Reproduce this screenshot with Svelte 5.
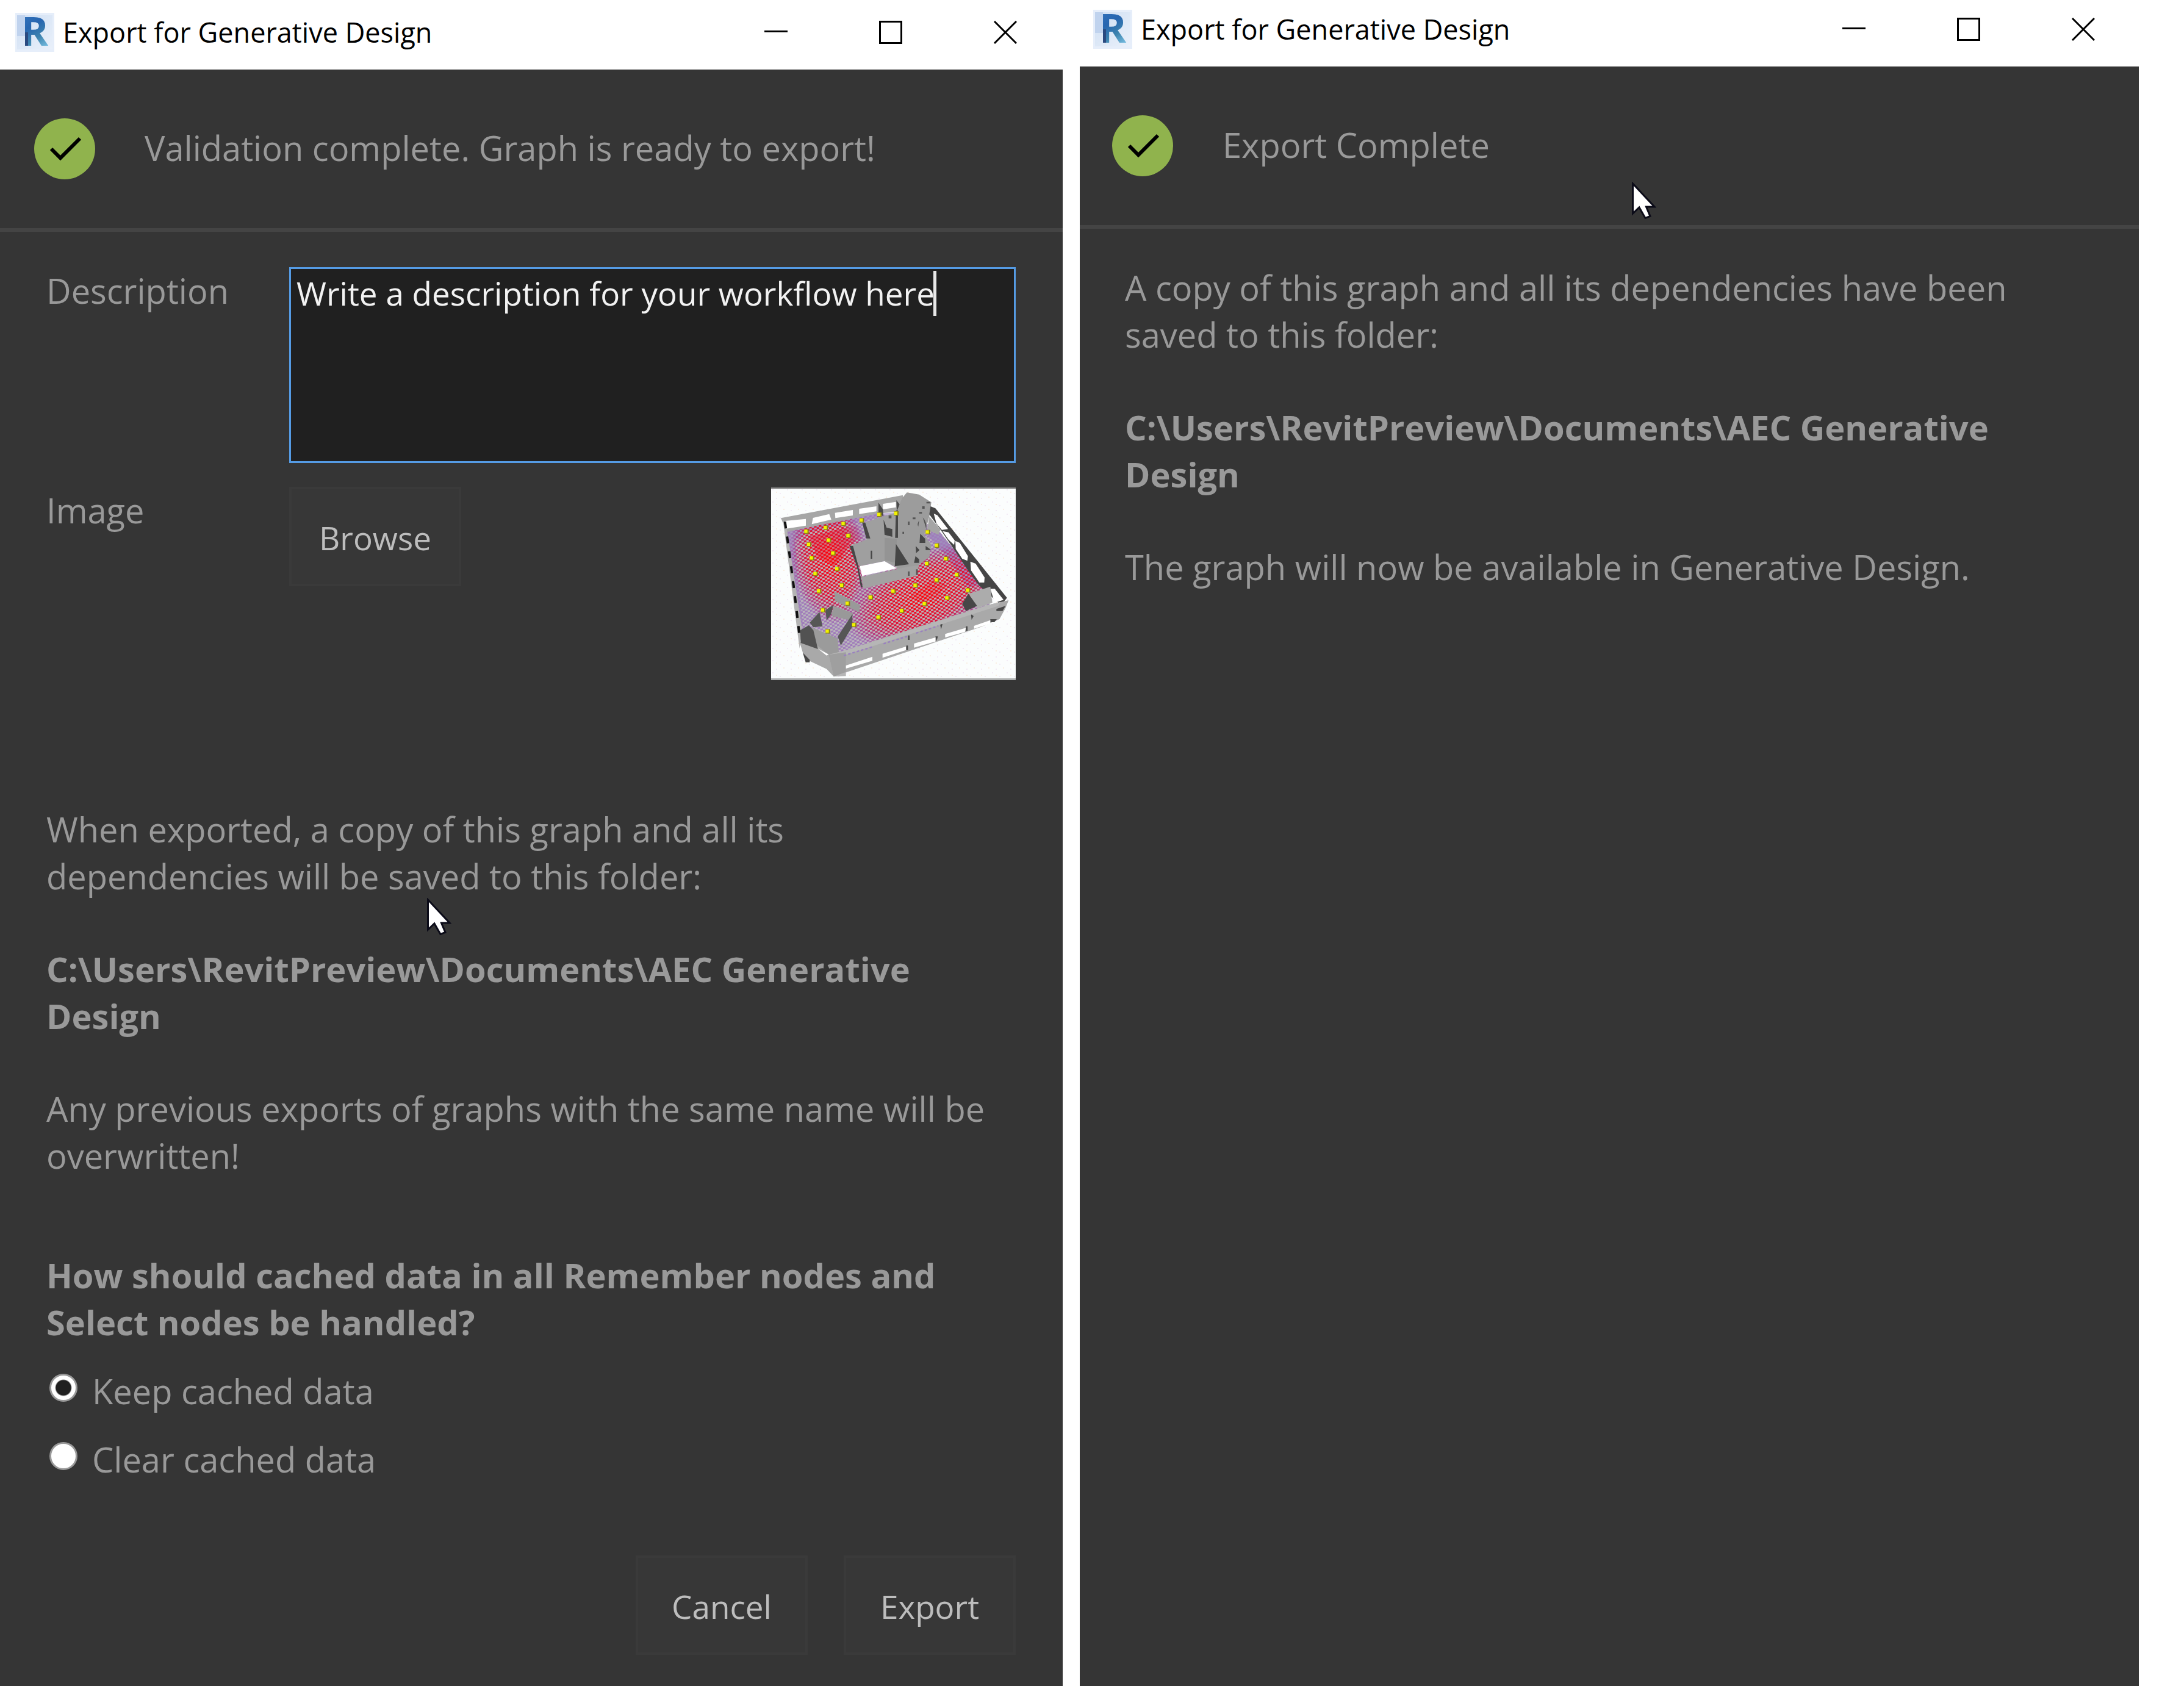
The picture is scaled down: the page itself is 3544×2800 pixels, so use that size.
<script>
  let description = $state('Write a description for your workflow here');
  let cached = $state('keep');

  const nodes = [
    [245, 273], [340, 254], [428, 235], [517, 218], [604, 190], [687, 184], [258, 337], [355, 316],
    [452, 294], [272, 404], [377, 380], [397, 457], [290, 481], [420, 538], [307, 566], [448, 627],
    [327, 660], [480, 732], [350, 764], [561, 597], [600, 695], [673, 567], [715, 663], [782, 538],
    [827, 629], [838, 431], [886, 512], [938, 600], [842, 276], [887, 342], [932, 407], [985, 486], [1040, 562]
  ];
</script>

{#snippet titleBar()}
  <header class="titlebar">
    <svg class="logo" viewBox="0 0 64 64" aria-hidden="true">
      <defs>
        <linearGradient id="logo-bg" x1="0" y1="0" x2="1" y2="1">
          <stop offset="0" stop-color="#cfdff3" />
          <stop offset="1" stop-color="#e9f0fa" />
        </linearGradient>
        <linearGradient id="logo-fg" x1="0" y1="0" x2="0.3" y2="1">
          <stop offset="0" stop-color="#3c7cc4" />
          <stop offset="0.5" stop-color="#2766b0" />
          <stop offset="0.75" stop-color="#3d83ae" />
          <stop offset="1" stop-color="#78bfe2" />
        </linearGradient>
      </defs>
      <rect width="64" height="64" fill="#e6eefa" />
      <rect x="3" y="4" width="58" height="56" fill="url(#logo-bg)" />
      <path d="M3 4h13v34H3z" fill="#c0d3ee" />
      <text x="10" y="54" class="logo-letter" fill="url(#logo-fg)">R</text>
      <path d="M16 32h5v22h-5z" fill="#2a4a80" />
    </svg>
    <h1>Export for Generative Design</h1>
    <div class="controls">
      <button aria-label="Minimize"><svg viewBox="0 0 38 38"><path d="M0 17.5h38" /></svg></button>
      <button aria-label="Maximize"><svg viewBox="0 0 38 38"><path d="M1.5 1.5h35v35h-35z" /></svg></button>
      <button aria-label="Close"><svg viewBox="0 0 38 38"><path d="M1 1l36 36M37 1L1 37" /></svg></button>
    </div>
  </header>
{/snippet}

{#snippet status(message)}
  <div class="status" role="status">
    <svg class="tick" viewBox="0 0 100 100" aria-hidden="true">
      <circle cx="50" cy="50" r="50" />
      <path d="M28 50l15 15 32-32" />
    </svg>
    <span>{message}</span>
  </div>
{/snippet}

{#snippet pointer()}
  <svg class="pointer" viewBox="0 0 40 62" aria-hidden="true">
    <path d="M1.5 3V52L12 42L22 59.500L30 56.500L23.500 41H37Z" />
  </svg>
{/snippet}

<main class="desktop">
  <section class="window setup">
    {@render titleBar()}
    <div class="client">
      {@render status('Validation complete. Graph is ready to export!')}
      <form class="content" onsubmit={(e) => e.preventDefault()}>
        <div class="fields">
          <label for="description">Description</label>
          <div class="editor">
            <textarea id="description" bind:value={description} spellcheck="false"></textarea>
            <span class="caret"></span>
          </div>
          <label for="browse">Image</label>
          <div class="picker">
            <button class="action" id="browse" type="button">Browse</button>
            <svg class="preview" viewBox="72 54 1203 951" role="img" aria-label="Graph preview">
              <defs>
                <pattern id="paper" width="72" height="60" patternUnits="userSpaceOnUse">
                  <rect width="72" height="60" fill="#fbfdfd" />
                  <path d="M6 6h6v6H6zM42 24h6v6h-6zM24 48h6v6h-6z" fill="#f3ebf6" />
                  <path d="M24 18h6v6h-6zM60 42h6v6h-6z" fill="#faeee2" />
                </pattern>
                <pattern id="grid" width="24" height="18" patternUnits="userSpaceOnUse" patternTransform="rotate(-9)">
                  <rect width="13" height="9" fill="#fff" />
                  <rect x="12" y="9" width="12" height="9" fill="#fff" />
                </pattern>
                <mask id="cells"><rect x="72" y="54" width="1203" height="951" fill="url(#grid)" /></mask>
                <radialGradient id="heat-a" gradientUnits="userSpaceOnUse" cx="0" cy="0" r="1" gradientTransform="translate(360 410) rotate(-8) scale(200 330)">
                  <stop offset="0" stop-color="#ff0008" />
                  <stop offset="0.6" stop-color="#dc1238" />
                  <stop offset="0.85" stop-color="#b03a86" stop-opacity="0.8" />
                  <stop offset="1" stop-color="#a070b8" stop-opacity="0" />
                </radialGradient>
                <radialGradient id="heat-b" gradientUnits="userSpaceOnUse" cx="0" cy="0" r="1" gradientTransform="translate(820 590) rotate(-24) scale(420 220)">
                  <stop offset="0" stop-color="#ff0008" />
                  <stop offset="0.6" stop-color="#dc1238" />
                  <stop offset="0.85" stop-color="#b03a86" stop-opacity="0.8" />
                  <stop offset="1" stop-color="#a070b8" stop-opacity="0" />
                </radialGradient>
              </defs>
              <rect x="72" y="54" width="1203" height="951" fill="url(#paper)" />
              <path d="M72 58.500H1275" stroke="#666" stroke-width="9" />
              <path d="M72 1000.500H1275" stroke="#aeb0b0" stroke-width="9" />

              <path d="M145 265L600 185L850 240L905 280L1110 530L1150 640L400 880L215 790Z" fill="#bab6bd" />
              <path d="M145 265L600 185L700 180L520 225L250 275L190 320L205 520L230 740L205 730Z" fill="#9d84bc" opacity="0.6" />
              <path d="M830 280L905 285L1110 530L1040 550L940 400Z" fill="#9780bd" opacity="0.75" />
              <g mask="url(#cells)">
                <path d="M145 265L600 185L850 240L905 280L1110 530L1150 640L400 880L215 790Z" fill="#a07cba" />
                <path d="M145 265L600 185L850 240L905 280L1110 530L1150 640L400 880L215 790Z" fill="url(#heat-a)" />
                <path d="M145 265L600 185L850 240L905 280L1110 530L1150 640L400 880L215 790Z" fill="url(#heat-b)" />
              </g>
              <path d="M260 300L520 235L530 300L460 330L420 400L380 440L300 400Z" fill="url(#heat-a)" opacity="0.4" />
              <path d="M750 600L870 510L930 530L900 590L820 620Z" fill="url(#heat-b)" opacity="0.2" />

              <path d="M120 208L720 95V175L600 185L150 275Z" fill="#a6a6a6" />
              <path d="M140 222L243 212V245L146 260ZM278 207L358 188L368 215L272 238ZM386 182L474 168V195L388 208ZM505 162L590 150V175L505 188ZM622 138L686 128V155L622 165Z" fill="#fff" />
              <path d="M600 132L622 165L624 200L600 180ZM688 120L716 155L712 175L690 170Z" fill="#4a4a4a" />
              <path d="M130 215L150 265L225 760L212 850Z" fill="#b4b4b4" />
              <path d="M140 225L162 380L180 520L196 650L212 790" fill="none" stroke="#111" stroke-width="12" stroke-dasharray="34 40" />

              <path d="M528 232L620 200L690 180V450L630 420L505 445L458 345L545 312Z" fill="#9f9f9f" />
              <path d="M690 175L716 110L740 82L800 92L860 130L850 200L825 290L860 340L850 400L795 440L785 490L690 460Z" fill="#9c9c9c" />
              <path d="M508 445L630 420L690 455L520 493Z" fill="#fff" />
              <path d="M516 497L745 447L800 440L785 492L525 555Z" fill="#a2a2a2" />
              <path d="M630 305L690 310V430L630 415Z" fill="#949494" />
              <path d="M458 345H475L500 440L522 545L514 550L495 450ZM686 335L750 435L680 445ZM520 230H535L560 308H540ZM625 215L640 255L668 262V300L630 290ZM686 170H696V305H682ZM805 285L830 310V330H802ZM783 345L802 365L785 380ZM782 395L800 410V428H775ZM832 345L860 365H832ZM562 368H569V408H562Z" fill="#464646" />
              <path d="M815 150h12v12h-12zM800 178h14v8h-14zM836 128h18v8h-18zM745 225h8v18h-8zM768 205h14v9h-14zM818 205q20 20 18 60M800 220q-12 18-4 30M650 195h14v14h-14zM718 275h8v10h-8zM745 470h8v22h-8zM785 460h8v28h-8z" fill="#555" />

              <path d="M856 150L880 160L1232 600L1215 622L1190 625L1095 540L1040 465L960 345L905 265L850 190Z" fill="#454545" />
              <path d="M850 200L905 265L895 290L840 265Z" fill="#a5a5a5" />
              <path d="M872 186L890 194L942 262L912 266L885 235ZM915 272L945 278L975 318L972 340L945 315ZM978 320L1000 330L1040 395L1037 418L1012 408L980 360ZM1052 422L1078 432L1122 500L1120 525L1096 525L1055 465ZM1150 556L1172 556L1215 610L1172 625Z" fill="#fff" />

              <path d="M1045 580L1150 545L1160 625L1085 650Z" fill="#acacac" />
              <path d="M1042 580L1085 640L1030 665L1012 630Z" fill="#474747" />

              <path d="M385 570L510 635L505 672L385 615ZM378 640L475 675L460 710L370 690Z" fill="#999" />
              <path d="M262 722L310 670L325 740L280 745ZM340 660L378 635L368 680L345 712ZM472 680V740L415 835L400 790Z" fill="#565656" />
              <path d="M270 745L400 800L405 870L350 885L300 850Z" fill="#9b9b9b" />

              <path d="M212 815L300 835L355 880L440 860L570 815L1140 635L1240 612L1225 650L1195 705L1100 745L380 987L345 950L250 905L228 870Z" fill="#a9a9a9" />
              <path d="M215 760L258 735L280 760L302 852L218 822Z" fill="#525252" />
              <path d="M228 870L262 905V917H242ZM1180 655L1225 640L1210 665H1180ZM1150 705H1182L1170 720H1150ZM1055 680L1068 690L1058 708ZM903 730L915 728L908 755ZM745 785h8v22h-8zM737 835h8v22h-8zM1030 740h8v22h-8zM880 790h12l-6 24z" fill="#474747" />
              <path d="M355 880L440 858L1140 635L1200 620L1190 640L440 880L440 985L380 987Z" fill="#b6b6b6" />
              <path d="M355 880L440 868V965L380 987Z" fill="#9f9f9f" />
              <path d="M440 933L570 890V910L440 948ZM620 875L735 840V857L620 895ZM775 825L880 795V815L775 845ZM928 778L1030 748L1025 768L928 795ZM1070 738L1150 710V727L1070 752ZM302 850L355 878L345 884Z" fill="#fff" />
              <path d="M430 884L575 840M625 826L740 790M785 774L895 738" stroke="#9a80c0" stroke-width="7" stroke-dasharray="12 10" />

              {#each nodes as [x, y]}
                <rect x={x - 10} y={y - 10} width="22" height="22" fill="#8a8415" />
                <rect x={x - 10} y={y - 8} width="16" height="16" fill="#f2f200" />
              {/each}
            </svg>
          </div>
        </div>

        <div class="notes">
          <p>When exported, a copy of this graph and all its dependencies will be saved to this folder:</p>
          <p class="strong">C:\Users\RevitPreview\Documents\AEC Generative Design</p>
          <p>Any previous exports of graphs with the same name will be overwritten!</p>
        </div>

        <fieldset>
          <legend class="strong">How should cached data in all Remember nodes and Select nodes be handled?</legend>
          <label class="choice"><input type="radio" name="cached" value="keep" bind:group={cached} />Keep cached data</label>
          <label class="choice"><input type="radio" name="cached" value="clear" bind:group={cached} />Clear cached data</label>
        </fieldset>

        <footer>
          <button class="action" type="button">Cancel</button>
          <button class="action" type="submit">Export</button>
        </footer>
      </form>
    </div>
    {@render pointer()}
  </section>

  <section class="window done">
    {@render titleBar()}
    <div class="client">
      {@render status('Export Complete')}
      <div class="content notes">
        <p>A copy of this graph and all its dependencies have been saved to this folder:</p>
        <p class="strong">C:\Users\RevitPreview\Documents\AEC Generative Design</p>
        <p>The graph will now be available in Generative Design.</p>
      </div>
    </div>
    {@render pointer()}
  </section>
</main>

<style>
  :global(body) {
    background: #fff;
  }

  .desktop {
    display: grid;
    grid-template-columns: 1742fr 1736fr;
    gap: 28px;
    padding: 0 38px 34px 0;
    font-family: 'Open Sans', 'Segoe UI', sans-serif;
    font-size: 56px;
    line-height: 77px;
    color: #999;
  }

  .window {
    position: relative;
    display: flex;
    flex-direction: column;
    min-width: 0;
  }

  button,
  textarea {
    font-family: inherit;
  }

  .titlebar {
    display: flex;
    align-items: center;
    box-sizing: border-box;
    height: 114px;
    padding: 0 0 8px 25px;
    background: #fff;
    color: #000;
  }

  .done .titlebar {
    height: 109px;
    padding: 0 0 14px 22px;
  }

  .logo {
    width: 64px;
    height: 64px;
    margin-right: 14px;
    overflow: visible;
  }

  .logo-letter {
    font-size: 67px;
    font-weight: 700;
  }

  h1 {
    flex: 1;
    margin: 0;
    font-size: 45px;
    font-weight: 400;
    line-height: 64px;
  }

  .controls {
    display: flex;
    align-self: stretch;
  }

  .done .controls {
    margin-right: -3px;
  }

  .controls button {
    display: grid;
    place-items: center;
    width: 188px;
    padding: 0;
    border: 0;
    background: none;
  }

  .controls svg {
    width: 38px;
    height: 38px;
    fill: none;
    stroke: #000;
    stroke-width: 3;
  }

  .client {
    flex: 1;
    background: #353535;
  }

  .status {
    display: flex;
    align-items: center;
    gap: 81px;
    height: 260px;
    padding-left: 56px;
    border-bottom: 6px solid #444;
  }

  .done .status {
    padding-left: 53px;
  }

  .status span {
    padding-bottom: 3px;
  }

  .tick {
    width: 100px;
    height: 100px;
  }

  .tick circle {
    fill: #90b34d;
  }

  .tick path {
    fill: none;
    stroke: #000;
    stroke-width: 6;
  }

  .content {
    padding: 58px 77px 51px 76px;
  }

  .done .content {
    padding-left: 74px;
  }

  .fields {
    display: grid;
    grid-template-columns: 398px 1fr;
    row-gap: 39px;
  }

  .editor {
    position: relative;
    display: flex;
  }

  textarea {
    flex: 1;
    box-sizing: border-box;
    height: 321px;
    min-width: 0;
    padding: 2px 9px;
    border: 3px solid #559be4;
    background: #202020;
    color: #f2f2f2;
    font-size: 53px;
    line-height: 76px;
    resize: none;
    outline: 0;
  }

  .caret {
    position: absolute;
    top: 6px;
    left: 1056px;
    width: 5px;
    height: 74px;
    background: #e8e8e8;
  }

  .picker {
    display: flex;
    align-items: flex-start;
    justify-content: space-between;
  }

  .action {
    box-sizing: border-box;
    width: 282px;
    height: 163px;
    padding: 4px 0 0;
    border: 4px solid #3a3a3a;
    background: #373737;
    color: #bdbdbd;
    font-size: 53px;
    line-height: 72px;
  }

  .preview {
    width: 401px;
    height: 317px;
  }

  .setup .notes {
    margin-top: 206px;
  }

  p {
    max-width: 1560px;
    margin: 0 0 75px;
  }

  p:last-child {
    margin-bottom: 0;
  }

  .strong {
    font-weight: 700;
  }

  fieldset {
    display: flex;
    flex-direction: column;
    gap: 35px;
    margin: 119px 0 0;
    padding: 0;
    border: 0;
  }

  legend {
    padding: 0;
    margin-bottom: 36px;
  }

  .choice {
    display: flex;
    align-items: flex-start;
    gap: 24px;
  }

  input[type='radio'] {
    appearance: none;
    box-sizing: border-box;
    width: 46px;
    height: 46px;
    margin: 10px 0 0 5px;
    border: 3px solid #999;
    border-radius: 50%;
    background: #fff;
  }

  input[type='radio']:checked {
    background: radial-gradient(circle, #202020 12px, #fff 14px);
  }

  footer {
    display: flex;
    justify-content: flex-end;
    gap: 59px;
    margin-top: 119px;
  }

  .pointer {
    position: absolute;
    width: 40px;
    height: 62px;
  }

  .pointer path {
    fill: #fff;
    stroke: #0b0b18;
    stroke-width: 3;
  }

  .setup .pointer {
    top: 1472px;
    left: 700px;
  }

  .done .pointer {
    top: 298px;
    left: 905px;
  }
</style>
